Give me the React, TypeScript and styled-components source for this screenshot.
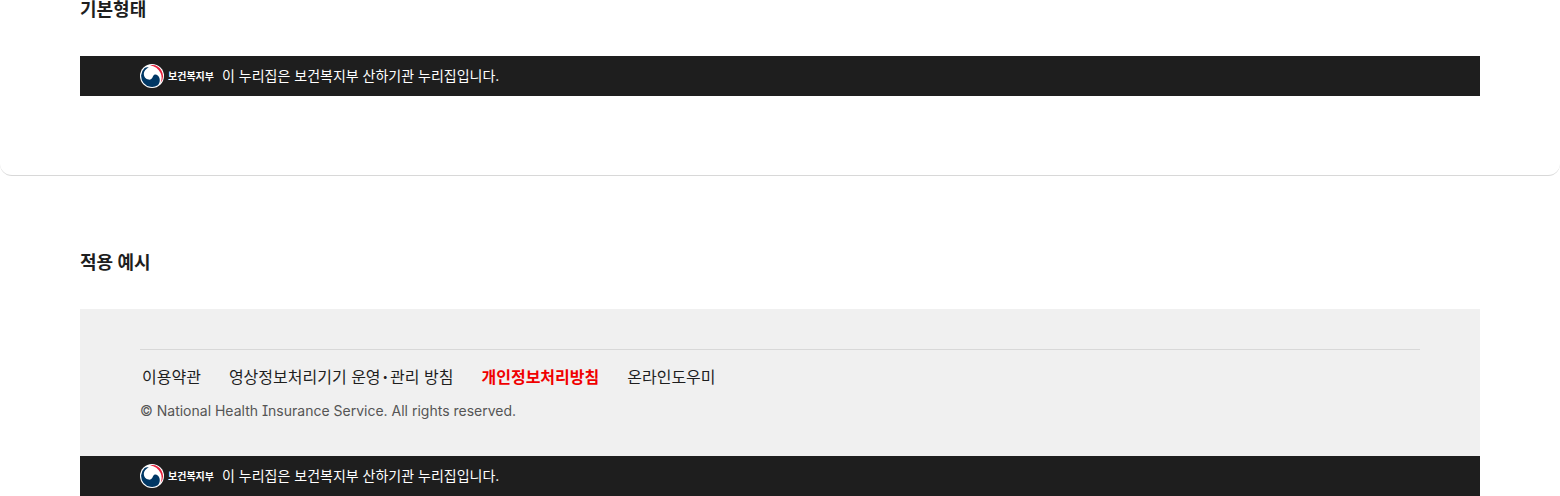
import React from "react";
import styled, { createGlobalStyle } from "styled-components";

const GlobalStyle = createGlobalStyle`
  * { box-sizing: border-box; }
  body {
    margin: 0;
    background: #fff;
    color: #1e1e1e;
    font-family: Inter, "Noto Sans CJK KR", sans-serif;
  }
`;

const Preview = styled.section`
  padding: 0 80px 79px;
  border-bottom: 1px solid #d8d8d8;
  border-radius: 0 0 12px 12px;
`;

const Example = styled.section`
  padding: 77px 80px 0;
`;

const Title = styled.h2`
  margin: 0 0 36px;
  font-size: 18px;
  font-weight: 700;
  line-height: 20px;
`;

const BannerBar = styled.div`
  display: flex;
  align-items: center;
  height: 40px;
  padding: 0 60px;
  gap: 8px;
  background: #1e1e1e;
  color: #fff;
`;

const Ministry = styled.span`
  display: flex;
  align-items: center;
  gap: 4px;
  font-size: 10px;
  font-weight: 700;
  line-height: 16px;
`;

const BannerText = styled.p`
  margin: 0;
  font-size: 14px;
  line-height: 20px;
`;

const Footer = styled.footer`
  padding: 40px 60px 32px;
  background: #f0f0f0;
`;

const FooterBody = styled.div`
  padding-top: 12px;
  border-top: 1px solid #d8d8d8;
`;

const Links = styled.nav`
  display: flex;
  gap: 28px;
  padding: 0 2px;
`;

const FooterLink = styled.a<{ $strong?: boolean }>`
  color: ${(p) => (p.$strong ? "#f00000" : "#1e1e1e")};
  font-size: 16px;
  font-weight: ${(p) => (p.$strong ? 700 : 400)};
  line-height: 30px;
  text-decoration: none;
`;

const MiddleDot = styled.span`
  font-family: "Noto Sans CJK KR", sans-serif;
  font-weight: 700;
  line-height: 1;
`;

const Copyright = styled.p`
  margin: 6px 0 0;
  color: #555;
  font-size: 14px;
  line-height: 26px;
  font-feature-settings: "cv08";
`;

function Emblem() {
  return (
    <svg width="24" height="24" viewBox="0 0 24 24" aria-hidden="true">
      <circle cx="12" cy="12" r="12" fill="#fff" />
      <path
        d="M10 1.2A11 11 0 0 1 20.4 19C22 15.8 22 12 20.6 9C18.6 4.8 14.8 2 10 1.2Z"
        fill="#e6203c"
      />
      <path
        d="M4.6 4A11 11 0 0 0 3.6 19A11 11 0 0 0 17.8 21.3C19.6 19.4 20.2 16.4 19.4 14C18.6 11.8 17 10.4 15.2 10.5C13.6 10.6 13.2 11.9 12.6 13.2C11.8 15 10.4 15.9 8.6 15.6C5.8 15.2 3.8 12.8 3.8 10C3.8 8 4.8 6.2 6.4 4.9C7.2 4.2 8 3.8 8.8 3.5C7.2 3.1 5.8 3.2 4.6 4Z"
        fill="#003764"
      />
    </svg>
  );
}

function Banner() {
  return (
    <BannerBar>
      <Ministry>
        <Emblem />
        보건복지부
      </Ministry>
      <BannerText>이 누리집은 보건복지부 산하기관 누리집입니다.</BannerText>
    </BannerBar>
  );
}

export default function App() {
  return (
    <>
      <GlobalStyle />
      <main>
        <Preview>
          <Title>기본형태</Title>
          <Banner />
        </Preview>
        <Example>
          <Title>적용 예시</Title>
          <Footer>
            <FooterBody>
              <Links>
                <FooterLink href="#terms">이용약관</FooterLink>
                <FooterLink href="#video">
                  영상정보처리기기 운영<MiddleDot>·</MiddleDot>관리 방침
                </FooterLink>
                <FooterLink href="#privacy" $strong>개인정보처리방침</FooterLink>
                <FooterLink href="#helper">온라인도우미</FooterLink>
              </Links>
              <Copyright>© National Health Insurance Service. All rights reserved.</Copyright>
            </FooterBody>
          </Footer>
          <Banner />
        </Example>
      </main>
    </>
  );
}
